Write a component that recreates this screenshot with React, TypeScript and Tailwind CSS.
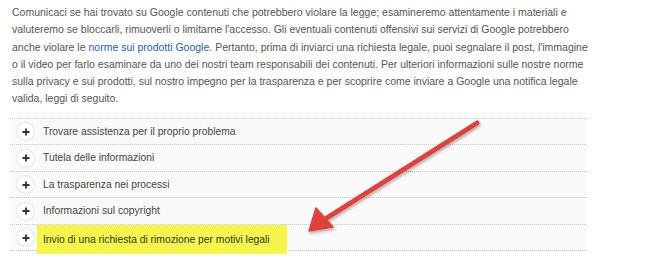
import React from 'react';

const items = [
  'Trovare assistenza per il proprio problema',
  'Tutela delle informazioni',
  'La trasparenza nei processi',
  'Informazioni sul copyright',
  'Invio di una richiesta di rimozione per motivi legali',
];

export default function App() {
  return (
    <div className="relative w-[665px] h-[262px] overflow-hidden bg-white pl-[12px] pt-[4px]" style={{ fontFamily: '"Liberation Sans", Arial, sans-serif' }}>
      <p className="w-[584px] text-[10.5px] leading-[17.3px] text-[#555]">
        Comunicaci se hai trovato su Google contenuti che potrebbero violare la legge; esamineremo attentamente i materiali e valuteremo se bloccarli, rimuoverli o limitarne l'accesso. Gli eventuali contenuti offensivi sui servizi di Google potrebbero anche violare le{' '}
        <a className="text-[#2a5db0]">norme sui prodotti Google</a>. Pertanto, prima di inviarci una richiesta legale, puoi segnalare il post, l'immagine o il video per farlo esaminare da uno dei nostri team responsabili dei contenuti. Per ulteriori informazioni sulle nostre norme sulla privacy e sui prodotti, sul nostro impegno per la trasparenza e per scoprire come inviare a Google una notifica legale valida, leggi di seguito.
      </p>

      <ul className="mt-[10px] w-[577px] -ml-[2px] bg-[#fafafa] border-b border-dotted border-[#c8c8c8]">
        {items.map((label, i) => (
          <li key={label} className="flex h-[26.5px] items-center border-t border-dotted border-[#c8c8c8] pl-[7px]">
            <span className="flex h-[17px] w-[17px] items-center justify-center rounded-full bg-white shadow-[0_0_2px_rgba(0,0,0,0.25)] text-[#333]">
              <svg width="8" height="8" viewBox="0 0 8 8"><path d="M4 0.5v7M0.5 4h7" stroke="currentColor" strokeWidth="1.8" /></svg>
            </span>
            {i === items.length - 1 ? (
              <span className="relative top-[2px] ml-[3px] flex h-[29px] items-center bg-[#f6f64a] pl-[6px] pr-[17px] text-[10.3px] text-[#333]">{label}</span>
            ) : (
              <span className="ml-[9px] text-[10.3px] text-[#444]">{label}</span>
            )}
          </li>
        ))}
      </ul>

      <svg className="pointer-events-none absolute left-0 top-0" width="665" height="262">
        <defs>
          <filter id="sh" x="-20%" y="-20%" width="140%" height="140%">
            <feDropShadow dx="1" dy="2" stdDeviation="1.5" floodColor="#000" floodOpacity="0.3" />
          </filter>
        </defs>
        <g filter="url(#sh)" fill="#e0433b" stroke="#e0433b">
          <line x1="477" y1="123" x2="322" y2="221" strokeWidth="5" strokeLinecap="round" />
          <polygon points="309,231 316,208 333,227" strokeWidth="1.5" strokeLinejoin="round" />
        </g>
      </svg>
    </div>
  );
}
